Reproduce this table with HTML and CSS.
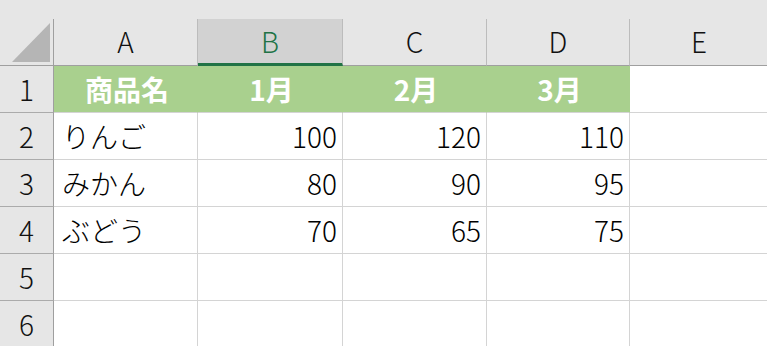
FILE: index.html
```html
<!DOCTYPE html>
<html lang="ja">
<head>
<meta charset="utf-8">
<title>Sheet</title>
<link rel="stylesheet" href="styles.css">
</head>
<body>
<div class="sheet">
  <div class="row head-row">
    <div class="corner">
      <svg class="tri" width="53" height="46" viewBox="0 0 53 46"><polygon points="12,43 50,43 50,4" fill="#b5b5b5"/></svg>
    </div>
    <div class="ch w-a">A</div>
    <div class="ch w-b sel">B</div>
    <div class="ch w-c">C</div>
    <div class="ch w-d">D</div>
    <div class="ch w-e last">E</div>
  </div>

  <div class="row">
    <div class="rh">1</div>
    <div class="c w-a hl center">商品名</div>
    <div class="c w-b hl center">1月</div>
    <div class="c w-c hl center">2月</div>
    <div class="c w-d hl center">3月</div>
    <div class="c w-e last"></div>
  </div>

  <div class="row">
    <div class="rh">2</div>
    <div class="c w-a">りんご</div>
    <div class="c w-b num">100</div>
    <div class="c w-c num">120</div>
    <div class="c w-d num">110</div>
    <div class="c w-e last"></div>
  </div>

  <div class="row">
    <div class="rh">3</div>
    <div class="c w-a">みかん</div>
    <div class="c w-b num">80</div>
    <div class="c w-c num">90</div>
    <div class="c w-d num">95</div>
    <div class="c w-e last"></div>
  </div>

  <div class="row">
    <div class="rh">4</div>
    <div class="c w-a">ぶどう</div>
    <div class="c w-b num">70</div>
    <div class="c w-c num">65</div>
    <div class="c w-d num">75</div>
    <div class="c w-e last"></div>
  </div>

  <div class="row">
    <div class="rh">5</div>
    <div class="c w-a"></div>
    <div class="c w-b"></div>
    <div class="c w-c"></div>
    <div class="c w-d"></div>
    <div class="c w-e last"></div>
  </div>

  <div class="row">
    <div class="rh">6</div>
    <div class="c w-a"></div>
    <div class="c w-b"></div>
    <div class="c w-c"></div>
    <div class="c w-d"></div>
    <div class="c w-e last"></div>
  </div>
</div>
</body>
</html>
```

FILE: styles.css
```css
* {
  box-sizing: border-box;
}

html, body {
  margin: 0;
  padding: 0;
  background: #ffffff;
  overflow: hidden;
}

.sheet {
  width: 767px;
  height: 346px;
  overflow: hidden;
  font-family: "Noto Sans CJK JP", "Noto Sans", sans-serif;
  font-size: 28px;
  font-weight: 300;
  color: #000000;
  line-height: 1;
}

.row {
  display: flex;
  height: 47px;
}

.head-row {
  height: 66px;
  padding-top: 19px;
  background: #e6e6e6;
}

.corner {
  width: 54px;
  height: 47px;
  border-right: 1px solid #9f9f9f;
  border-bottom: 1px solid #9f9f9f;
  flex: none;
}

.tri {
  display: block;
}

.ch {
  height: 47px;
  border-right: 1px solid #bcbcbc;
  border-bottom: 1px solid #9f9f9f;
  display: flex;
  align-items: center;
  justify-content: center;
  padding-bottom: 2px;
  color: #111111;
  flex: none;
}

.ch.sel {
  background: #d2d2d2;
  color: #217346;
  border-bottom: 3px solid #217346;
  padding-bottom: 0;
}

.w-a { width: 144px; }
.w-b { width: 145px; }
.w-c { width: 144px; }
.w-d { width: 143px; }
.w-e { width: 138px; }

.ch.last, .c.last {
  border-right: none;
}

.rh {
  width: 54px;
  height: 47px;
  flex: none;
  background: #e6e6e6;
  border-right: 1px solid #9f9f9f;
  border-bottom: 1px solid #ababab;
  display: flex;
  align-items: center;
  justify-content: center;
  color: #111111;
}

.c {
  height: 47px;
  flex: none;
  border-right: 1px solid #d4d4d4;
  border-bottom: 1px solid #d4d4d4;
  display: flex;
  align-items: center;
  padding: 0 5px 0 8px;
  white-space: nowrap;
}

.c.num {
  justify-content: flex-end;
}

.c.center {
  justify-content: center;
}

.c.hl {
  background: #a9d08e;
  border-right-color: #a9d08e;
  color: #ffffff;
  font-weight: 700;
}
```
